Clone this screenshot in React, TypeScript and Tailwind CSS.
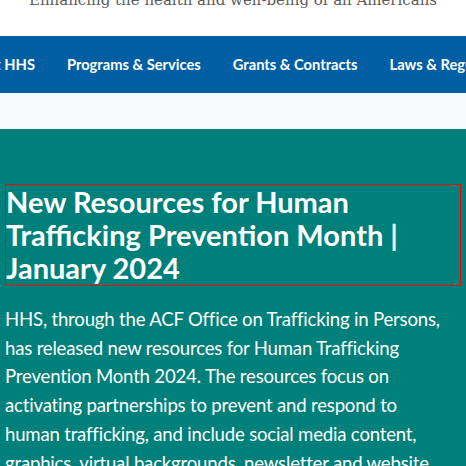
import React from "react";

export default function App() {
  const font = { fontFamily: "Lato, 'Noto Sans', sans-serif" };
  return (
    <div className="w-[466px] h-[466px] overflow-hidden bg-[#00807a]" style={font}>
      <header className="h-[36px] bg-white overflow-hidden flex justify-center">
        <p
          className="mt-[-11px] whitespace-nowrap text-[15px] text-[#5c5c5c]"
          style={{ fontFamily: "'DejaVu Serif', 'Liberation Serif', serif" }}
        >
          Enhancing the health and well-being of all Americans
        </p>
      </header>
      <nav className="h-[57px] bg-[#005ea2] overflow-hidden">
        <ul className="flex items-center h-full ml-[-56px] whitespace-nowrap text-white font-bold text-[14.7px]">
          <li className="px-4">About HHS</li>
          <li className="px-4">Programs &amp; Services</li>
          <li className="px-4">Grants &amp; Contracts</li>
          <li className="px-4">Laws &amp; Regulations</li>
        </ul>
      </nav>
      <div className="h-[36px] bg-[#f8f9fa]" />
      <main className="px-[5px] pt-[55px]">
        <h1 className="border border-[#ff0000] text-white font-bold text-[29px] leading-[33px] pb-[1px]">
          New Resources for Human Trafficking Prevention Month | January 2024
        </h1>
        <p className="mt-[19px] mr-[16px] text-white text-[18.6px] tracking-[-0.2px] leading-[28.7px]">
          HHS, through the ACF Office on Trafficking in Persons, has released new resources for Human Trafficking Prevention Month 2024. The resources focus on activating partnerships to prevent and respond to human trafficking, and include social media content, graphics, virtual backgrounds, newsletter and website content.
        </p>
      </main>
    </div>
  );
}
